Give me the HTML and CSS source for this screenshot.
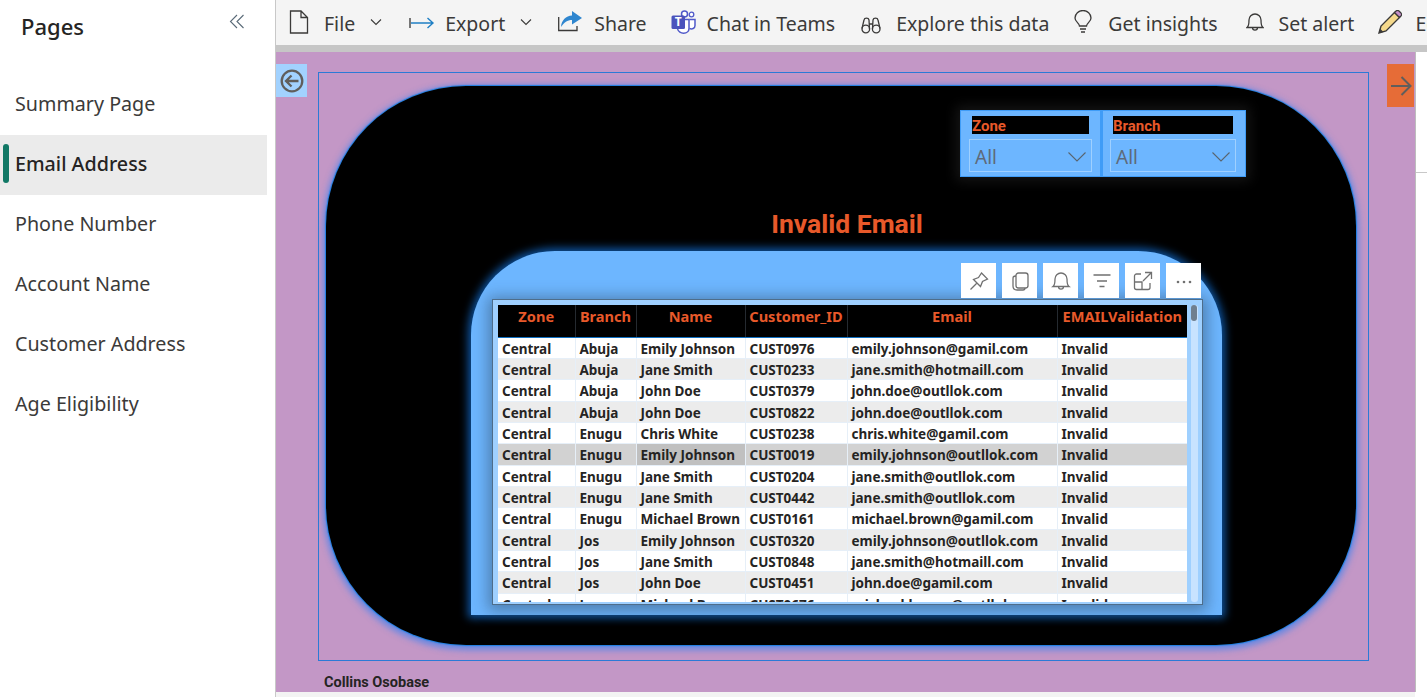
FILE: index.html

```html
<!DOCTYPE html>
<html lang="en">
<head>
  <meta charset="UTF-8" />
  <title>Email Address</title>
  <link rel="stylesheet" href="styles.css">
</head>
<body>
  <div class="app">
    <aside class="pages">
      <div class="pages-head">
        <h2>Pages</h2>
        <svg class="collapse" width="16" height="16" viewBox="0 0 16 16"><path d="M8 1 1.5 7.5 8 14M14.5 1 8 7.5 14.5 14" /></svg>
      </div>
      <nav class="page-list">
        <a href="#">Summary Page</a>
        <a href="#" class="active">Email Address</a>
        <a href="#">Phone Number</a>
        <a href="#">Account Name</a>
        <a href="#">Customer Address</a>
        <a href="#">Age Eligibility</a>
      </nav>
    </aside>

    <main class="main">
      <div class="toolbar">
        <div class="tool tool-file">
          <svg class="ic" width="20" height="24" viewBox="0 0 20 24"><path class="ln" d="M1.5 1H12L18.5 7.5V23H1.5ZM12 1V7.5H18.5" /></svg>
          <span>File</span>
          <svg class="chev" width="14" height="8" viewBox="0 0 14 8"><path d="M2 1.5 7 6.5 12 1.5" /></svg>
        </div>
        <div class="tool tool-export">
          <svg class="ic" width="26" height="14" viewBox="0 0 26 14"><path d="M1 2V12" stroke="#333" stroke-width="1.3" fill="none"/><path d="M2 7H24M18.5 2 24 7 18.5 12" stroke="#1f7fc4" stroke-width="1.4" fill="none"/></svg>
          <span>Export</span>
          <svg class="chev" width="14" height="8" viewBox="0 0 14 8"><path d="M2 1.5 7 6.5 12 1.5" /></svg>
        </div>
        <div class="tool tool-share">
          <svg class="ic" width="25" height="22" viewBox="0 0 25 22"><path class="ln" d="M.7 7V20.5H19V16" /><path d="M3 17C3.5 10 8 6 14 5.5V1L24 8 14 14.5V10C9.5 10 6 12.5 3 17Z" fill="#2f86cf"/></svg>
          <span>Share</span>
        </div>
        <div class="tool tool-teams">
          <svg class="ic" width="25" height="24" viewBox="0 0 25 24"><circle cx="13.5" cy="4" r="3" fill="#fff" stroke="#5059c9" stroke-width="1.5"/><circle cx="20.5" cy="4.5" r="2.3" fill="#fff" stroke="#5059c9" stroke-width="1.3"/><path d="M18.5 9.5H24V15.5C24 18.5 21 19.5 18.5 18.5" fill="#fff" stroke="#5059c9" stroke-width="1.5"/><path d="M6.5 19C8 22.5 10.5 23.2 12.5 23.2C16 23.2 18 21 18 18.5V9.5H13" fill="#fff" stroke="#5059c9" stroke-width="1.5"/><rect x="0.5" y="5.5" width="13.5" height="13.5" rx="1.5" fill="#4b53bc"/><text x="7.2" y="16.3" class="t-glyph">T</text></svg>
          <span>Chat in Teams</span>
        </div>
        <div class="tool tool-explore">
          <svg class="ic" width="20" height="17" viewBox="0 0 20 17"><g class="ln"><circle cx="4.8" cy="12" r="3.8" /><circle cx="15.2" cy="12" r="3.8" /><path d="M1 11.5 3 3C3.5 .5 7.5 .5 8 3L8.5 12M19 11.5 17 3C16.5 .5 12.5 .5 12 3L11.5 12M8.5 7H11.5" /></g></svg>
          <span>Explore this data</span>
        </div>
        <div class="tool tool-insights">
          <svg class="ic" width="18" height="23" viewBox="0 0 18 23"><path class="ln" d="M5.5 16C5.5 13 1 12 1 8A8 7.5 0 0 1 17 8C17 12 12.5 13 12.5 16ZM6 19H12M7 22H11" /></svg>
          <span>Get insights</span>
        </div>
        <div class="tool tool-alert">
          <svg class="ic" width="18" height="20" viewBox="0 0 18 20"><path class="ln" d="M1 15.5C3 14 3 12 3 8A6 6 0 0 1 15 8C15 12 15 14 17 15.5ZM6.5 15.5C6.5 19 11.5 19 11.5 15.5" /></svg>
          <span>Set alert</span>
        </div>
        <div class="tool tool-edit">
          <svg class="ic" width="24" height="24" viewBox="0 0 24 24"><path d="M1 23 3 16 16.5 2.5 21.5 7.5 8 21Z" fill="#f5d98b" stroke="#3b3a39" stroke-width="1.4"/><path d="M16.5 2.5 18 1C19 .2 20 .2 21 1L23 3C23.8 4 23.8 5 23 6L21.5 7.5Z" fill="#c58fc9" stroke="#3b3a39" stroke-width="1.2"/><path d="M1 23 2 18.5 5.5 22Z" fill="#3b3a39"/></svg>
          <span>Edit</span>
        </div>
      </div>
      <div class="toolbar-rule"></div>

      <div class="stage">
        <section class="canvas">
          <button class="nav-btn back">
            <svg width="24" height="24" viewBox="0 0 24 24"><circle cx="12" cy="12" r="10.3" /><path d="M18.5 12H6.5M11.5 6.5 6 12 11.5 17.5" /></svg>
          </button>
          <button class="nav-btn next">
            <svg width="22" height="22" viewBox="0 0 22 22"><path d="M1 11H20M11.5 2 20.5 11 11.5 20" /></svg>
          </button>

          <div class="frame"></div>
          <div class="blob"></div>

          <div class="slicers">
            <div class="slicer">
              <div class="slicer-title">Zone</div>
              <div class="slicer-drop"><span>All</span><svg width="18" height="10" viewBox="0 0 18 10"><path d="M.5 .5 9 9 17.5 .5" /></svg></div>
            </div>
            <div class="slicer">
              <div class="slicer-title">Branch</div>
              <div class="slicer-drop"><span>All</span><svg width="18" height="10" viewBox="0 0 18 10"><path d="M.5 .5 9 9 17.5 .5" /></svg></div>
            </div>
          </div>

          <h1 class="report-title">Invalid Email</h1>

          <div class="panel"></div>

          <div class="visual">
            <div class="grid-wrap">
              <table class="grid">
                <colgroup>
                  <col class="c-zone"><col class="c-branch"><col class="c-name"><col class="c-id"><col class="c-email"><col class="c-valid">
                </colgroup>
                <thead>
                  <tr><th>Zone</th><th>Branch</th><th>Name</th><th>Customer_ID</th><th>Email</th><th>EMAILValidation</th></tr>
                </thead>
                <tbody>
                  <tr><td>Central</td><td>Abuja</td><td>Emily Johnson</td><td>CUST0976</td><td>emily.johnson@gamil.com</td><td>Invalid</td></tr>
                  <tr><td>Central</td><td>Abuja</td><td>Jane Smith</td><td>CUST0233</td><td>jane.smith@hotmaill.com</td><td>Invalid</td></tr>
                  <tr><td>Central</td><td>Abuja</td><td>John Doe</td><td>CUST0379</td><td>john.doe@outllok.com</td><td>Invalid</td></tr>
                  <tr><td>Central</td><td>Abuja</td><td>John Doe</td><td>CUST0822</td><td>john.doe@outllok.com</td><td>Invalid</td></tr>
                  <tr><td>Central</td><td>Enugu</td><td>Chris White</td><td>CUST0238</td><td>chris.white@gamil.com</td><td>Invalid</td></tr>
                  <tr class="hover"><td>Central</td><td>Enugu</td><td class="hover-cell">Emily Johnson</td><td>CUST0019</td><td>emily.johnson@outllok.com</td><td>Invalid</td></tr>
                  <tr><td>Central</td><td>Enugu</td><td>Jane Smith</td><td>CUST0204</td><td>jane.smith@outllok.com</td><td>Invalid</td></tr>
                  <tr><td>Central</td><td>Enugu</td><td>Jane Smith</td><td>CUST0442</td><td>jane.smith@outllok.com</td><td>Invalid</td></tr>
                  <tr><td>Central</td><td>Enugu</td><td>Michael Brown</td><td>CUST0161</td><td>michael.brown@gamil.com</td><td>Invalid</td></tr>
                  <tr><td>Central</td><td>Jos</td><td>Emily Johnson</td><td>CUST0320</td><td>emily.johnson@outllok.com</td><td>Invalid</td></tr>
                  <tr><td>Central</td><td>Jos</td><td>Jane Smith</td><td>CUST0848</td><td>jane.smith@hotmaill.com</td><td>Invalid</td></tr>
                  <tr><td>Central</td><td>Jos</td><td>John Doe</td><td>CUST0451</td><td>john.doe@gamil.com</td><td>Invalid</td></tr>
                  <tr><td>Central</td><td>Jos</td><td>Michael Brown</td><td>CUST0676</td><td>michael.brown@outllok.com</td><td>Invalid</td></tr>
                </tbody>
              </table>
            </div>
            <div class="scroll"><div class="thumb"></div></div>
          </div>

          <div class="visual-actions">
            <span class="act"><svg viewBox="0 0 20 20"><path d="M1.5 18.5 7.5 12.5M12.5 2 18.5 8 13.5 10.5 11.5 15.5 4.5 8.5 9.5 6.5Z" /></svg></span>
            <span class="act"><svg viewBox="0 0 20 20"><rect x="6" y="2" width="12" height="15" rx="2.5" /><path d="M6 5C3 5 3 6 3 8V15C3 18 4 19 7 19H13C14 19 15 18.5 15 17" /></svg></span>
            <span class="act"><svg viewBox="0 0 20 20"><path d="M2 15.5C4 14 4 12 4 8A6 6 0 0 1 16 8C16 12 16 14 18 15.5ZM7.5 15.5C7.5 19 12.5 19 12.5 15.5" /></svg></span>
            <span class="act"><svg viewBox="0 0 20 20"><path d="M1.5 4H18.5M5 10H15M7.5 15.5H12.5" /></svg></span>
            <span class="act"><svg viewBox="0 0 20 20"><path d="M8 3H3.5C2.5 3 1.5 4 1.5 5V16.5C1.5 17.5 2.5 18.5 3.5 18.5H15C16 18.5 17 17.5 17 16.5V12M12 1.5H18.5V8M18.5 1.5 10 10M1.5 11H9V18.5" /></svg></span>
            <span class="act"><svg viewBox="0 0 20 20"><circle class="dot" cx="4" cy="11" r="1.3" /><circle class="dot" cx="10" cy="11" r="1.3" /><circle class="dot" cx="16" cy="11" r="1.3" /></svg></span>
          </div>

          <div class="credit">Collins Osobase</div>
        </section>
        <div class="right-rail"></div>
      </div>
      <div class="bottom-bar"></div>
    </main>
  </div>
</body>
</html>
```

FILE: styles.css

```css
html, body {
  margin: 0;
  padding: 0;
  height: 100%;
  overflow: hidden;
  background: white;
  font-family: "Noto Sans", "Open Sans", sans-serif;
}
.app {
  display: flex;
  height: 697px;
}

/* pages sidebar */
.pages {
  width: 275px;
  flex: none;
  border-right: 1px solid #c8c8c8;
  background: white;
}
.pages-head {
  display: flex;
  align-items: flex-start;
  justify-content: space-between;
  height: 75px;
  padding: 0 30px 0 21px;
}
.pages-head h2 {
  margin: 12px 0 0;
  font-size: 22px;
  line-height: 29px;
  font-weight: 500;
  color: #252423;
}
.collapse {
  margin-top: 14px;
}
.collapse path {
  fill: none;
  stroke: #5a6a78;
  stroke-width: 1.1;
}
.page-list {
  display: flex;
  flex-direction: column;
  width: 267px;
}
.page-list a {
  display: block;
  height: 60px;
  line-height: 58px;
  padding-left: 15px;
  font-size: 19.7px;
  color: #3b3a39;
  text-decoration: none;
}
.page-list a.active {
  position: relative;
  background: #ebebeb;
  color: #252423;
  font-weight: 500;
}
.page-list a.active::before {
  content: "";
  position: absolute;
  left: 3px;
  top: 9px;
  width: 6px;
  height: 39px;
  border-radius: 3px;
  background: #117865;
}

/* top toolbar */
.main {
  flex: 1;
  min-width: 0;
  display: flex;
  flex-direction: column;
}
.toolbar {
  display: flex;
  height: 45px;
  flex: none;
  padding-left: 13px;
  background: #f4f4f4;
  overflow: hidden;
  white-space: nowrap;
}
.tool {
  display: flex;
  align-items: center;
  flex: none;
  height: 45px;
  font-size: 19.5px;
  color: #3b3a39;
}
.tool span {
  padding-top: 2px;
}
.ln {
  fill: none;
  stroke: #3b3a39;
  stroke-width: 1.3;
}
.tool .ic {
  flex: none;
}
.chev {
  margin-left: 14px;
  margin-bottom: 1px;
}
.chev path {
  fill: none;
  stroke: #3b3a39;
  stroke-width: 1.1;
}
.tool-file .ic { margin-bottom: 1px; }
.tool-file span { margin-left: 15px; }
.tool-export { margin-left: 26px; }
.tool-export span { margin-left: 10px; }
.tool-share { margin-left: 25px; }
.tool-share .ic { margin-bottom: 4px; }
.tool-share span { margin-left: 11px; }
.tool-teams { margin-left: 24px; }
.tool-teams .ic { margin-bottom: 2px; }
.tool-teams span { margin-left: 11px; }
.tool-explore { margin-left: 26px; }
.tool-explore .ic { margin-top: 5px; }
.tool-explore span { margin-left: 15px; }
.tool-insights { margin-left: 25px; }
.tool-insights .ic { margin-bottom: 2px; }
.tool-insights span { margin-left: 16px; }
.tool-alert { margin-left: 28px; }
.tool-alert .ic { margin-bottom: 1px; }
.tool-alert span { margin-left: 15px; }
.tool-edit { margin-left: 24px; }
.tool-edit .ic { margin-bottom: 1px; }
.tool-edit span { margin-left: 13px; }
.t-glyph {
  font-family: "Noto Sans", sans-serif;
  font-size: 12px;
  font-weight: 700;
  fill: white;
  text-anchor: middle;
}
.toolbar-rule {
  height: 7px;
  flex: none;
  background: #c6c6c6;
}

/* report area */
.stage {
  display: flex;
  height: 640px;
  flex: none;
}
.canvas {
  position: relative;
  width: 1139px;
  flex: none;
  overflow: hidden;
  background: #c397c6;
}
.right-rail {
  flex: 1;
  border-left: 1px solid #bdbdbd;
  background: white;
  background-image: linear-gradient(#c8c8c8, #c8c8c8);
  background-repeat: no-repeat;
  background-size: 100% 1px;
  background-position: 0 120px;
}
.bottom-bar {
  flex: 1;
  width: 1139px;
  background: #f3f3f3;
}
.nav-btn {
  position: absolute;
  display: flex;
  align-items: center;
  justify-content: center;
  padding: 0;
  border: 0;
}
.back {
  left: 0;
  top: 12px;
  width: 31px;
  height: 33px;
  background: #a2d2ff;
}
.back svg, .next svg {
  fill: none;
  stroke: #605e5c;
}
.back svg {
  stroke-width: 2.3;
}
.next {
  left: 1111px;
  top: 12px;
  width: 27px;
  height: 43px;
  background: #e66c37;
}
.next svg {
  stroke-width: 2;
}
.frame {
  position: absolute;
  left: 42px;
  top: 20px;
  width: 1049px;
  height: 587px;
  border: 1px solid #2c7ad6;
}
.blob {
  position: absolute;
  left: 50px;
  top: 34px;
  width: 1030px;
  height: 559px;
  border-radius: 140px;
  background: black;
  box-shadow: 0 0 1px 1px #1f7fe0, 0 2px 6px 3px rgba(60, 130, 240, 0.7);
}

/* slicers */
.slicers {
  position: absolute;
  left: 684px;
  top: 58px;
  display: flex;
  box-shadow: 0 0 12px 4px rgba(60, 60, 60, 0.35);
}
.slicer {
  box-sizing: border-box;
  width: 141px;
  height: 67px;
  padding: 5px 8px 0 8px;
  background: #6db6ff;
  border: 1px solid #3f9cf7;
}
.slicer + .slicer {
  width: 145px;
  border-left-width: 2px;
  padding-left: 7px;
  padding-right: 9px;
}
.slicer-title {
  height: 18px;
  margin: 0 3px;
  background: black;
  color: #e8592a;
  font-family: "Roboto", sans-serif;
  font-size: 15px;
  font-weight: 700;
  line-height: 20px;
}
.slicer-drop {
  box-sizing: border-box;
  display: flex;
  align-items: center;
  justify-content: space-between;
  height: 33px;
  margin-top: 5px;
  padding: 2px 5px 0 5px;
  border: 1px solid #9fd0ff;
  color: #5e6a7a;
  font-size: 19px;
}
.slicer-drop svg path {
  fill: none;
  stroke: #59646f;
  stroke-width: 1.1;
}
.report-title {
  position: absolute;
  left: 400px;
  top: 154px;
  width: 342px;
  margin: 0;
  text-align: center;
  color: #e8592a;
  font-family: "Roboto", sans-serif;
  font-size: 26.5px;
  line-height: 36px;
  font-weight: 700;
}

/* table visual */
.panel {
  position: absolute;
  left: 195px;
  top: 199px;
  width: 751px;
  height: 364px;
  border-radius: 84px 84px 0 0;
  background: #6db6ff;
  box-shadow: 0 0 8px 3px rgba(20, 120, 230, 0.7);
}
.visual {
  position: absolute;
  left: 216px;
  top: 247px;
  box-sizing: border-box;
  display: flex;
  width: 711px;
  height: 306px;
  padding: 5px 2px 2px 5px;
  background: #9fd0ff;
  border: 1px solid #4e6d8a;
  box-shadow: 0 2px 14px 4px rgba(40, 60, 80, 0.45);
}
.grid-wrap {
  width: 689px;
  height: 297px;
  overflow: hidden;
  background: white;
}
.grid {
  width: 689px;
  border-collapse: collapse;
  table-layout: fixed;
  font-family: "Noto Sans", sans-serif;
  font-size: 13.5px;
}
.c-zone { width: 77px; }
.c-branch { width: 61px; }
.c-name { width: 109px; }
.c-id { width: 102px; }
.c-email { width: 210px; }
.c-valid { width: 130px; }
.grid th {
  height: 32px;
  padding: 0 0 10px;
  background: black;
  color: #e8592a;
  font-size: 14.6px;
  font-weight: 700;
  text-align: center;
  white-space: nowrap;
  border-right: 1px solid #252a30;
  border-bottom: 1px solid #0f6fc0;
  box-sizing: border-box;
}
.grid th:last-child { border-right: 0; }
.grid td {
  height: 21.35px;
  padding: 2px 0 0 4px;
  line-height: 18px;
  color: #252423;
  font-weight: 700;
  border-right: 1px solid #e6eff8;
  border-bottom: 1px solid #e6eff8;
  box-sizing: border-box;
  white-space: nowrap;
  overflow: hidden;
}
.grid td:last-child { border-right: 0; }
.grid tbody tr:nth-child(even) td { background: #ececec; }
.grid tbody tr.hover td { background: #d2d2d2; }
.grid tbody tr.hover td.hover-cell { background: #c0c0c0; }
.scroll {
  position: relative;
  flex: 1;
}
.scroll::before {
  content: "";
  position: absolute;
  left: 4px;
  top: 0;
  bottom: 0;
  width: 7px;
  border-radius: 3px;
  background: #c8e3ff;
}
.thumb {
  position: absolute;
  left: 4px;
  top: 0;
  width: 6px;
  height: 16px;
  border-radius: 3px;
  background: #6f7f8f;
}
.visual-actions {
  position: absolute;
  left: 685px;
  top: 211px;
  display: flex;
  gap: 6px;
}
.act {
  display: flex;
  align-items: center;
  justify-content: center;
  width: 35px;
  height: 35px;
  background: white;
}
.act svg {
  width: 20px;
  height: 20px;
  fill: none;
  stroke: #707070;
  stroke-width: 1.3;
}
.act svg .dot {
  fill: #707070;
  stroke: none;
}
.credit {
  position: absolute;
  left: 48px;
  top: 622px;
  font-family: "Roboto", sans-serif;
  font-size: 14.5px;
  line-height: 18px;
  font-weight: 700;
  color: #252423;
}
```
